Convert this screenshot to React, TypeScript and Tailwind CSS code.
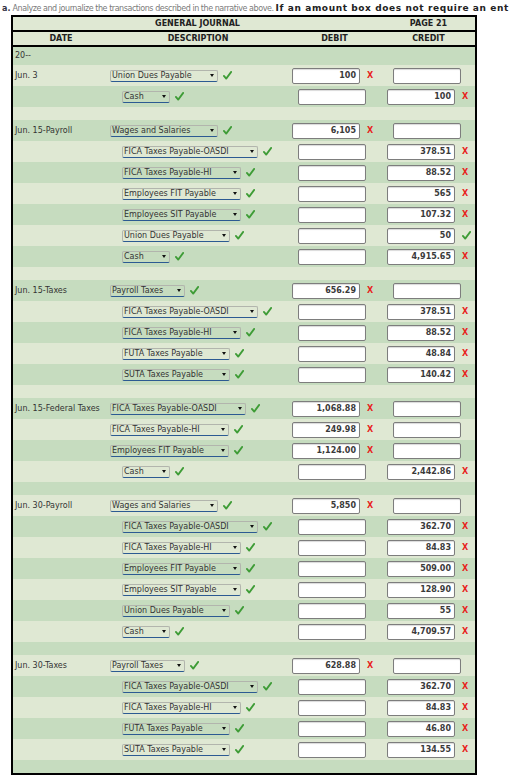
import React from "react";

type Mark = "x" | "ok";

type Line = {
  acct: string;
  w: number;
  level: 1 | 2;
  debit?: string;
  credit?: string;
  mark: Mark;
};

type Group = { date: string; lines: Line[] };

const OASDI = "FICA Taxes Payable-OASDI";
const HI = "FICA Taxes Payable-HI";

// journal entries as shown in the screenshot
const groups: Group[] = [
  {
    date: "Jun. 3",
    lines: [
      { acct: "Union Dues Payable", w: 108, level: 1, debit: "100", mark: "x" },
      { acct: "Cash", w: 48, level: 2, credit: "100", mark: "x" },
    ],
  },
  {
    date: "Jun. 15-Payroll",
    lines: [
      { acct: "Wages and Salaries", w: 108, level: 1, debit: "6,105", mark: "x" },
      { acct: OASDI, w: 136, level: 2, credit: "378.51", mark: "x" },
      { acct: HI, w: 119, level: 2, credit: "88.52", mark: "x" },
      { acct: "Employees FIT Payable", w: 119, level: 2, credit: "565", mark: "x" },
      { acct: "Employees SIT Payable", w: 119, level: 2, credit: "107.32", mark: "x" },
      { acct: "Union Dues Payable", w: 108, level: 2, credit: "50", mark: "ok" },
      { acct: "Cash", w: 48, level: 2, credit: "4,915.65", mark: "x" },
    ],
  },
  {
    date: "Jun. 15-Taxes",
    lines: [
      { acct: "Payroll Taxes", w: 75, level: 1, debit: "656.29", mark: "x" },
      { acct: OASDI, w: 136, level: 2, credit: "378.51", mark: "x" },
      { acct: HI, w: 119, level: 2, credit: "88.52", mark: "x" },
      { acct: "FUTA Taxes Payable", w: 108, level: 2, credit: "48.84", mark: "x" },
      { acct: "SUTA Taxes Payable", w: 108, level: 2, credit: "140.42", mark: "x" },
    ],
  },
  {
    date: "Jun. 15-Federal Taxes",
    lines: [
      { acct: OASDI, w: 136, level: 1, debit: "1,068.88", mark: "x" },
      { acct: HI, w: 119, level: 1, debit: "249.98", mark: "x" },
      { acct: "Employees FIT Payable", w: 119, level: 1, debit: "1,124.00", mark: "x" },
      { acct: "Cash", w: 48, level: 2, credit: "2,442.86", mark: "x" },
    ],
  },
  {
    date: "Jun. 30-Payroll",
    lines: [
      { acct: "Wages and Salaries", w: 108, level: 1, debit: "5,850", mark: "x" },
      { acct: OASDI, w: 136, level: 2, credit: "362.70", mark: "x" },
      { acct: HI, w: 119, level: 2, credit: "84.83", mark: "x" },
      { acct: "Employees FIT Payable", w: 119, level: 2, credit: "509.00", mark: "x" },
      { acct: "Employees SIT Payable", w: 119, level: 2, credit: "128.90", mark: "x" },
      { acct: "Union Dues Payable", w: 108, level: 2, credit: "55", mark: "x" },
      { acct: "Cash", w: 48, level: 2, credit: "4,709.57", mark: "x" },
    ],
  },
  {
    date: "Jun. 30-Taxes",
    lines: [
      { acct: "Payroll Taxes", w: 75, level: 1, debit: "628.88", mark: "x" },
      { acct: OASDI, w: 136, level: 2, credit: "362.70", mark: "x" },
      { acct: HI, w: 119, level: 2, credit: "84.83", mark: "x" },
      { acct: "FUTA Taxes Payable", w: 108, level: 2, credit: "46.80", mark: "x" },
      { acct: "SUTA Taxes Payable", w: 108, level: 2, credit: "134.55", mark: "x" },
    ],
  },
];

function Check({ className = "" }: { className?: string }) {
  return (
    <svg width="9" height="9" viewBox="0 0 9 9" className={`shrink-0 ${className}`}>
      <path d="M0.9 4.9 L3.2 7.6 L8.2 0.9" fill="none" stroke="#3e9c36" strokeWidth="1.8" strokeLinecap="round" strokeLinejoin="round" />
    </svg>
  );
}

function Cross() {
  return <span className="ml-[7px] text-[8px] font-bold leading-none text-[#e8231c]">X</span>;
}

function MarkIcon({ mark }: { mark: Mark }) {
  return mark === "x" ? <Cross /> : <Check className="ml-[7px]" />;
}

function Select({ label, w }: { label: string; w: number }) {
  return (
    <div
      className="relative flex h-[12px] shrink-0 items-center rounded-[2px] border border-[#b2b5ad] border-b-[#2c5a92] pl-[1px] text-[8px] leading-none text-[#333]"
      style={{ width: w }}
    >
      <span className="whitespace-nowrap">{label}</span>
      <svg width="4" height="3" viewBox="0 0 4 3" className="absolute right-[3px] top-[3px]">
        <polygon points="0,0 4,0 2,3" fill="#111" />
      </svg>
    </div>
  );
}

function Amount({ value, className = "" }: { value?: string; className?: string }) {
  return (
    <div
      className={`flex h-[16px] w-[68px] shrink-0 items-center justify-end rounded-[2px] border border-[#7d7d7d] bg-white pr-[3px] text-[8px] font-bold leading-none text-[#3a3a3a] shadow-[inset_0_1px_1px_rgba(0,0,0,0.15)] ${className}`}
    >
      {value}
    </div>
  );
}

function EntryRow({ date, line, dark }: { date?: string; line: Line; dark: boolean }) {
  return (
    <div className={`flex h-[21px] items-center ${dark ? "bg-[#c6dcbf]" : "bg-[#dfe8d3]"}`}>
      <div className="w-[96px] shrink-0 whitespace-nowrap pl-[2px] text-[8px] text-[#333]">{date}</div>
      <div className="flex w-[178px] shrink-0 items-center">
        <div className={line.level === 1 ? "ml-[1px]" : "ml-[13px]"}>
          <Select label={line.acct} w={line.w} />
        </div>
        <Check className="ml-[5px]" />
      </div>
      <div className="flex w-[95px] shrink-0 items-center">
        {line.debit ? (
          <>
            <Amount value={line.debit} className="ml-[5px]" />
            <MarkIcon mark={line.mark} />
          </>
        ) : (
          <Amount className="ml-[11px]" />
        )}
      </div>
      <div className="flex flex-1 items-center">
        {line.credit ? (
          <>
            <Amount value={line.credit} className="ml-[5px]" />
            <MarkIcon mark={line.mark} />
          </>
        ) : (
          <Amount className="ml-[11px]" />
        )}
      </div>
    </div>
  );
}

function Spacer({ dark }: { dark: boolean }) {
  return <div className={`h-[13px] ${dark ? "bg-[#c6dcbf]" : "bg-[#dfe8d3]"}`} />;
}

export default function App() {
  // rows alternate shading all the way down, spacer rows included
  let idx = 1;
  const body: React.ReactNode[] = [];
  groups.forEach((g, gi) => {
    g.lines.forEach((line, li) => {
      body.push(<EntryRow key={`${gi}-${li}`} date={li === 0 ? g.date : undefined} line={line} dark={idx % 2 === 0} />);
      idx++;
    });
    body.push(<Spacer key={`sp-${gi}`} dark={idx % 2 === 0} />);
    idx++;
  });

  return (
    <div className="h-[778px] w-[509px] overflow-hidden bg-white font-['DejaVu_Sans',sans-serif]">
      {/* instructions line, the page cuts it at the right edge */}
      <div className="h-[15px] overflow-hidden whitespace-nowrap pl-[2px] leading-[11px]">
        <span className="text-[8px] font-bold text-[#334]">a.</span>
        <span className="text-[8px] tracking-[-0.45px] text-[#7a7a7a]"> Analyze and journalize the transactions described in the narrative above. </span>
        <span className="text-[9px] font-bold tracking-[0.6px] text-[#222]">If an amount box does not require an entr</span>
      </div>

      <div className="ml-[11px] w-[466px] border-2 border-black">
        <div className="flex h-[13px] items-center bg-[#dfe8d3] text-[8px] font-bold text-[#222]">
          <div className="w-[369px] text-center">GENERAL JOURNAL</div>
          <div className="flex-1 text-center">PAGE 21</div>
        </div>
        <div className="flex h-[17px] items-center border-y-2 border-black bg-[#dfe8d3] text-[8px] font-bold text-[#222]">
          <div className="w-[96px] text-center">DATE</div>
          <div className="w-[178px] text-center">DESCRIPTION</div>
          <div className="w-[95px] text-center">DEBIT</div>
          <div className="flex-1 text-center">CREDIT</div>
        </div>
        <div className="flex h-[18px] items-center bg-[#c6dcbf] pl-[2px] text-[8px] text-[#333]">20--</div>
        {body}
      </div>
    </div>
  );
}
